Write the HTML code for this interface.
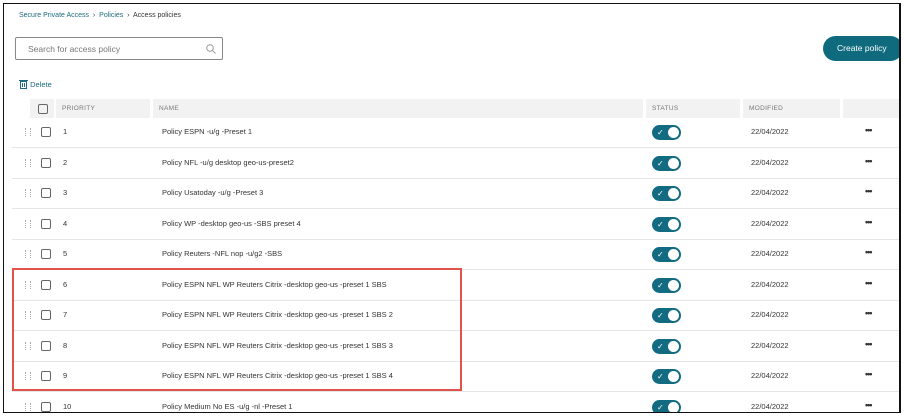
<!DOCTYPE html>
<html><head><style>
body{margin:0;width:904px;height:420px;background:#fff;font-family:"Liberation Sans",sans-serif;position:relative;overflow:hidden;color:#333}
.frame{position:absolute;left:3px;top:3px;width:895px;height:408px;border:1px solid #111;border-right:2px solid #111;overflow:hidden;background:#fff}
.a{position:absolute}
.bc{left:15px;top:8px;font-size:7px;color:#1c6b7f}
.bc span{color:#333}
.search{left:11px;top:33px;width:208px;height:23px;border:1px solid #888;border-radius:2px;font-size:8.5px;color:#777;line-height:23px;padding-left:12px;box-sizing:border-box}
.btn{left:819px;top:32px;width:80px;height:25px;background:#0f6a7e;border-radius:13px;color:#fff;font-size:8.5px;line-height:25px;text-indent:14px}
.del{left:15px;top:75px;font-size:7.5px;color:#1c6b7f}
.hd{top:95px;height:19px;background:#f2f2f2;font-size:6.5px;color:#777;line-height:19px;letter-spacing:.3px}
.row{left:8px;width:890px;height:30px;border-bottom:1px solid #e6e6e6;font-size:7.5px;line-height:30px;color:#333}
.cb{position:absolute;width:8px;height:8px;border:1.2px solid #666;border-radius:2px;top:10px;left:29px}
.drag{position:absolute;left:13px;top:11px;width:4px;height:8px;border-left:1px dotted #aaa;border-right:1px dotted #aaa}
.tg{position:absolute;left:640px;top:8px;width:29px;height:15px;background:#136b82;border-radius:8px}
.tg:after{content:"";position:absolute;right:2px;top:2px;width:11px;height:11px;background:#fff;border-radius:50%}
.tg:before{content:"✓";position:absolute;left:5px;top:0;line-height:15px;color:#fff;font-size:8px}
.dots{position:absolute;left:853px;top:-2px;font-weight:bold;font-size:9px;letter-spacing:-1px}
.red{left:8px;top:264px;width:446px;height:119px;border:2px solid #e0524a}
</style></head><body>
<div class="frame">
<div class="a bc">Secure Private Access &nbsp;<span>›</span>&nbsp; Policies &nbsp;<span>›&nbsp; Access policies</span></div>
<div class="a search">Search for access policy<svg style="position:absolute;right:6px;top:6px" width="10" height="10"><circle cx="4" cy="4" r="3.3" fill="none" stroke="#999"/><line x1="6.5" y1="6.5" x2="9.5" y2="9.5" stroke="#999"/></svg></div>
<div class="a btn">Create policy</div>
<div class="a del"><svg width="9" height="10" style="vertical-align:-2px"><rect x="1.5" y="2.5" width="6" height="7" fill="none" stroke="#1c6b7f"/><line x1="0" y1="1.5" x2="9" y2="1.5" stroke="#1c6b7f"/><line x1="3.5" y1="4" x2="3.5" y2="8" stroke="#1c6b7f"/><line x1="5.5" y1="4" x2="5.5" y2="8" stroke="#1c6b7f"/></svg> Delete</div>
<div class="a hd" style="left:26px;width:24px"><div class="cb" style="left:8px;top:5px"></div></div>
<div class="a hd" style="left:52px;width:94px;padding-left:6px;box-sizing:border-box">PRIORITY</div>
<div class="a hd" style="left:149px;width:490px;padding-left:6px;box-sizing:border-box">NAME</div>
<div class="a hd" style="left:642px;width:94px;padding-left:6px;box-sizing:border-box">STATUS</div>
<div class="a hd" style="left:739px;width:97px;padding-left:6px;box-sizing:border-box">MODIFIED</div>
<div class="a hd" style="left:839px;width:60px"></div>

<div class="a row" style="top:113px"><div class="drag"></div><div class="cb"></div><span class="a" style="left:51px">1</span><span class="a" style="left:150px">Policy ESPN -u/g -Preset 1</span><div class="tg"></div><span class="a" style="left:739px">22/04/2022</span><span class="dots">•••</span></div>
<div class="a row" style="top:144px"><div class="drag"></div><div class="cb"></div><span class="a" style="left:51px">2</span><span class="a" style="left:150px">Policy NFL -u/g desktop geo-us-preset2</span><div class="tg"></div><span class="a" style="left:739px">22/04/2022</span><span class="dots">•••</span></div>
<div class="a row" style="top:174px"><div class="drag"></div><div class="cb"></div><span class="a" style="left:51px">3</span><span class="a" style="left:150px">Policy Usatoday -u/g -Preset 3</span><div class="tg"></div><span class="a" style="left:739px">22/04/2022</span><span class="dots">•••</span></div>
<div class="a row" style="top:205px"><div class="drag"></div><div class="cb"></div><span class="a" style="left:51px">4</span><span class="a" style="left:150px">Policy WP -desktop geo-us -SBS preset 4</span><div class="tg"></div><span class="a" style="left:739px">22/04/2022</span><span class="dots">•••</span></div>
<div class="a row" style="top:235px"><div class="drag"></div><div class="cb"></div><span class="a" style="left:51px">5</span><span class="a" style="left:150px">Policy Reuters -NFL nop -u/g2 -SBS</span><div class="tg"></div><span class="a" style="left:739px">22/04/2022</span><span class="dots">•••</span></div>
<div class="a row" style="top:266px"><div class="drag"></div><div class="cb"></div><span class="a" style="left:51px">6</span><span class="a" style="left:150px">Policy ESPN NFL WP Reuters Citrix -desktop geo-us -preset 1 SBS</span><div class="tg"></div><span class="a" style="left:739px">22/04/2022</span><span class="dots">•••</span></div>
<div class="a row" style="top:296px"><div class="drag"></div><div class="cb"></div><span class="a" style="left:51px">7</span><span class="a" style="left:150px">Policy ESPN NFL WP Reuters Citrix -desktop geo-us -preset 1 SBS 2</span><div class="tg"></div><span class="a" style="left:739px">22/04/2022</span><span class="dots">•••</span></div>
<div class="a row" style="top:327px"><div class="drag"></div><div class="cb"></div><span class="a" style="left:51px">8</span><span class="a" style="left:150px">Policy ESPN NFL WP Reuters Citrix -desktop geo-us -preset 1 SBS 3</span><div class="tg"></div><span class="a" style="left:739px">22/04/2022</span><span class="dots">•••</span></div>
<div class="a row" style="top:357px"><div class="drag"></div><div class="cb"></div><span class="a" style="left:51px">9</span><span class="a" style="left:150px">Policy ESPN NFL WP Reuters Citrix -desktop geo-us -preset 1 SBS 4</span><div class="tg"></div><span class="a" style="left:739px">22/04/2022</span><span class="dots">•••</span></div>
<div class="a row" style="top:388px"><div class="drag"></div><div class="cb"></div><span class="a" style="left:51px">10</span><span class="a" style="left:150px">Policy Medium No ES -u/g -nl -Preset 1</span><div class="tg"></div><span class="a" style="left:739px">22/04/2022</span><span class="dots">•••</span></div>
<div class="a red"></div>
</div>
</body></html>
